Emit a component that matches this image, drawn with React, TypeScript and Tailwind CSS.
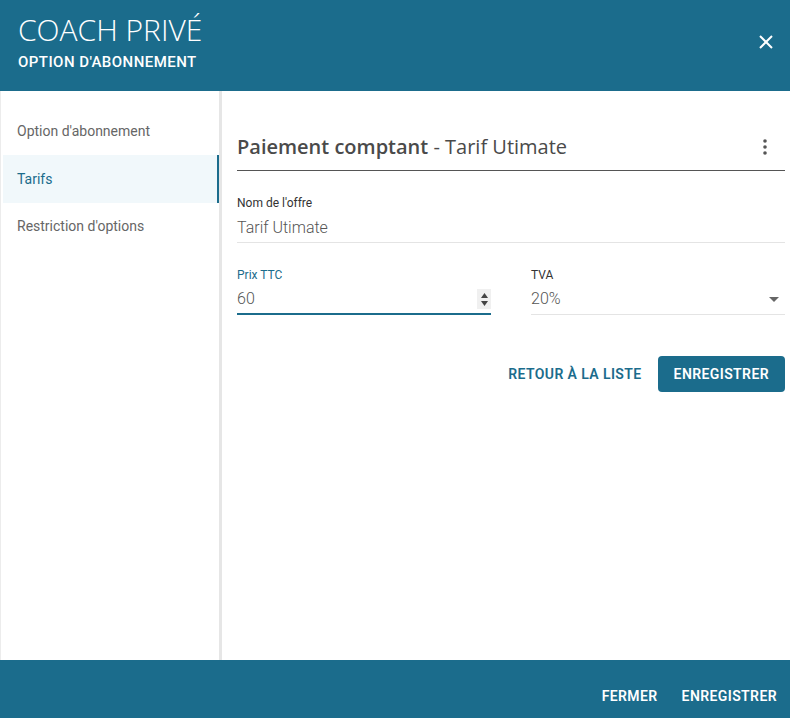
import React from "react";

export default function App() {
  return (
    <div className="w-[790px] h-[718px] flex flex-col bg-white overflow-hidden" style={{ fontFamily: "Roboto, 'Liberation Sans', sans-serif" }}>
      {/* Header */}
      <div className="h-[91px] shrink-0 bg-[#1b6c8c] flex items-start justify-between pl-[18px] pr-[16px]">
        <div className="flex flex-col">
          <div className="mt-[11px] text-[30px] leading-[37px] text-white font-light" style={{ fontFamily: "'Open Sans', sans-serif" }}>COACH PRIVÉ</div>
          <div className="mt-[5px] text-[15px] leading-[18px] text-white font-medium tracking-[0.45px]">OPTION D'ABONNEMENT</div>
        </div>
        <button className="mt-[34px] text-white">
          <svg width="16" height="16" viewBox="0 0 16 16" fill="none" stroke="white" strokeWidth="2">
            <path d="M2 2 L14 14 M14 2 L2 14" />
          </svg>
        </button>
      </div>

      {/* Body */}
      <div className="flex flex-1 min-h-0">
        <div className="w-[222px] shrink-0 border-r-[3px] border-[#e6e6e6] border-l border-l-[#ececec] pt-[16px] flex flex-col">
          <div className="h-[48px] pl-[16px] flex items-center text-[14px] text-[#666]">Option d'abonnement</div>
          <div className="h-[48px] ml-[2px] pl-[14px] flex items-center text-[14px] text-[#1b6c8c] bg-[#f1f8fb] border-r-2 border-[#1b6c8c]">Tarifs</div>
          <div className="h-[46px] pl-[16px] flex items-center text-[14px] text-[#666]">Restriction d'options</div>
        </div>

        <div className="flex-1 pl-[15px] pr-[5px] pt-[43px]">
          <div className="flex items-center justify-between border-b border-[#555] pb-[10px]">
            <div className="text-[20px] leading-[26px] text-[#4a4a4a]" style={{ fontFamily: "'Open Sans', sans-serif" }}>
              <span className="font-semibold">Paiement comptant</span>
              <span className="font-normal"> - Tarif Utimate</span>
            </div>
            <svg width="4" height="16" viewBox="0 0 4 16" className="mr-[18px]">
              <circle cx="2" cy="2" r="1.8" fill="#555" />
              <circle cx="2" cy="8" r="1.8" fill="#555" />
              <circle cx="2" cy="14" r="1.8" fill="#555" />
            </svg>
          </div>

          <div className="mt-[25px] border-b border-[#e4e4e4] pb-[4px]">
            <div className="text-[12px] leading-[14px] text-[#333]">Nom de l'offre</div>
            <div className="mt-[8px] text-[16px] leading-[20px] text-[#555] font-light">Tarif Utimate</div>
          </div>

          <div className="mt-[25px] flex gap-[40px]">
            <div className="flex-1 border-b-2 border-[#1b6c8c] pb-[3px]">
              <div className="text-[12px] leading-[14px] text-[#1b6c8c]">Prix TTC</div>
              <div className="mt-[7px] flex items-center justify-between">
                <div className="text-[16px] leading-[20px] text-[#555] font-light">60</div>
                <div className="w-[14px] h-[20px] bg-[#f0f0f0] flex flex-col items-center justify-center gap-[3px]">
                  <svg width="7" height="5" viewBox="0 0 7 5"><path d="M3.5 0 L7 5 L0 5 Z" fill="#444" /></svg>
                  <svg width="7" height="5" viewBox="0 0 7 5"><path d="M0 0 L7 0 L3.5 5 Z" fill="#444" /></svg>
                </div>
              </div>
            </div>
            <div className="flex-1 border-b border-[#e4e4e4] pb-[5px]">
              <div className="text-[12px] leading-[14px] text-[#333]">TVA</div>
              <div className="mt-[7px] flex items-center justify-between">
                <div className="text-[16px] leading-[20px] text-[#555] font-light">20%</div>
                <svg width="10" height="5" viewBox="0 0 10 5" className="mr-[6px]"><path d="M0 0 L10 0 L5 5 Z" fill="#666" /></svg>
              </div>
            </div>
          </div>

          <div className="mt-[41px] flex justify-end items-center gap-[16px]">
            <button className="text-[14px] font-semibold text-[#1b6c8c] tracking-[0.4px]">RETOUR À LA LISTE</button>
            <button className="h-[36px] px-[16px] rounded-[4px] bg-[#1b6c8c] text-white text-[14px] font-semibold tracking-[0.4px]">ENREGISTRER</button>
          </div>
        </div>
      </div>

      {/* Footer */}
      <div className="h-[58px] shrink-0 bg-[#1b6c8c] flex items-center justify-end gap-[24px] pr-[13px] pt-[14px]">
        <button className="text-[14px] font-semibold text-white tracking-[0.4px]">FERMER</button>
        <button className="text-[14px] font-semibold text-white tracking-[0.4px]">ENREGISTRER</button>
      </div>
    </div>
  );
}
